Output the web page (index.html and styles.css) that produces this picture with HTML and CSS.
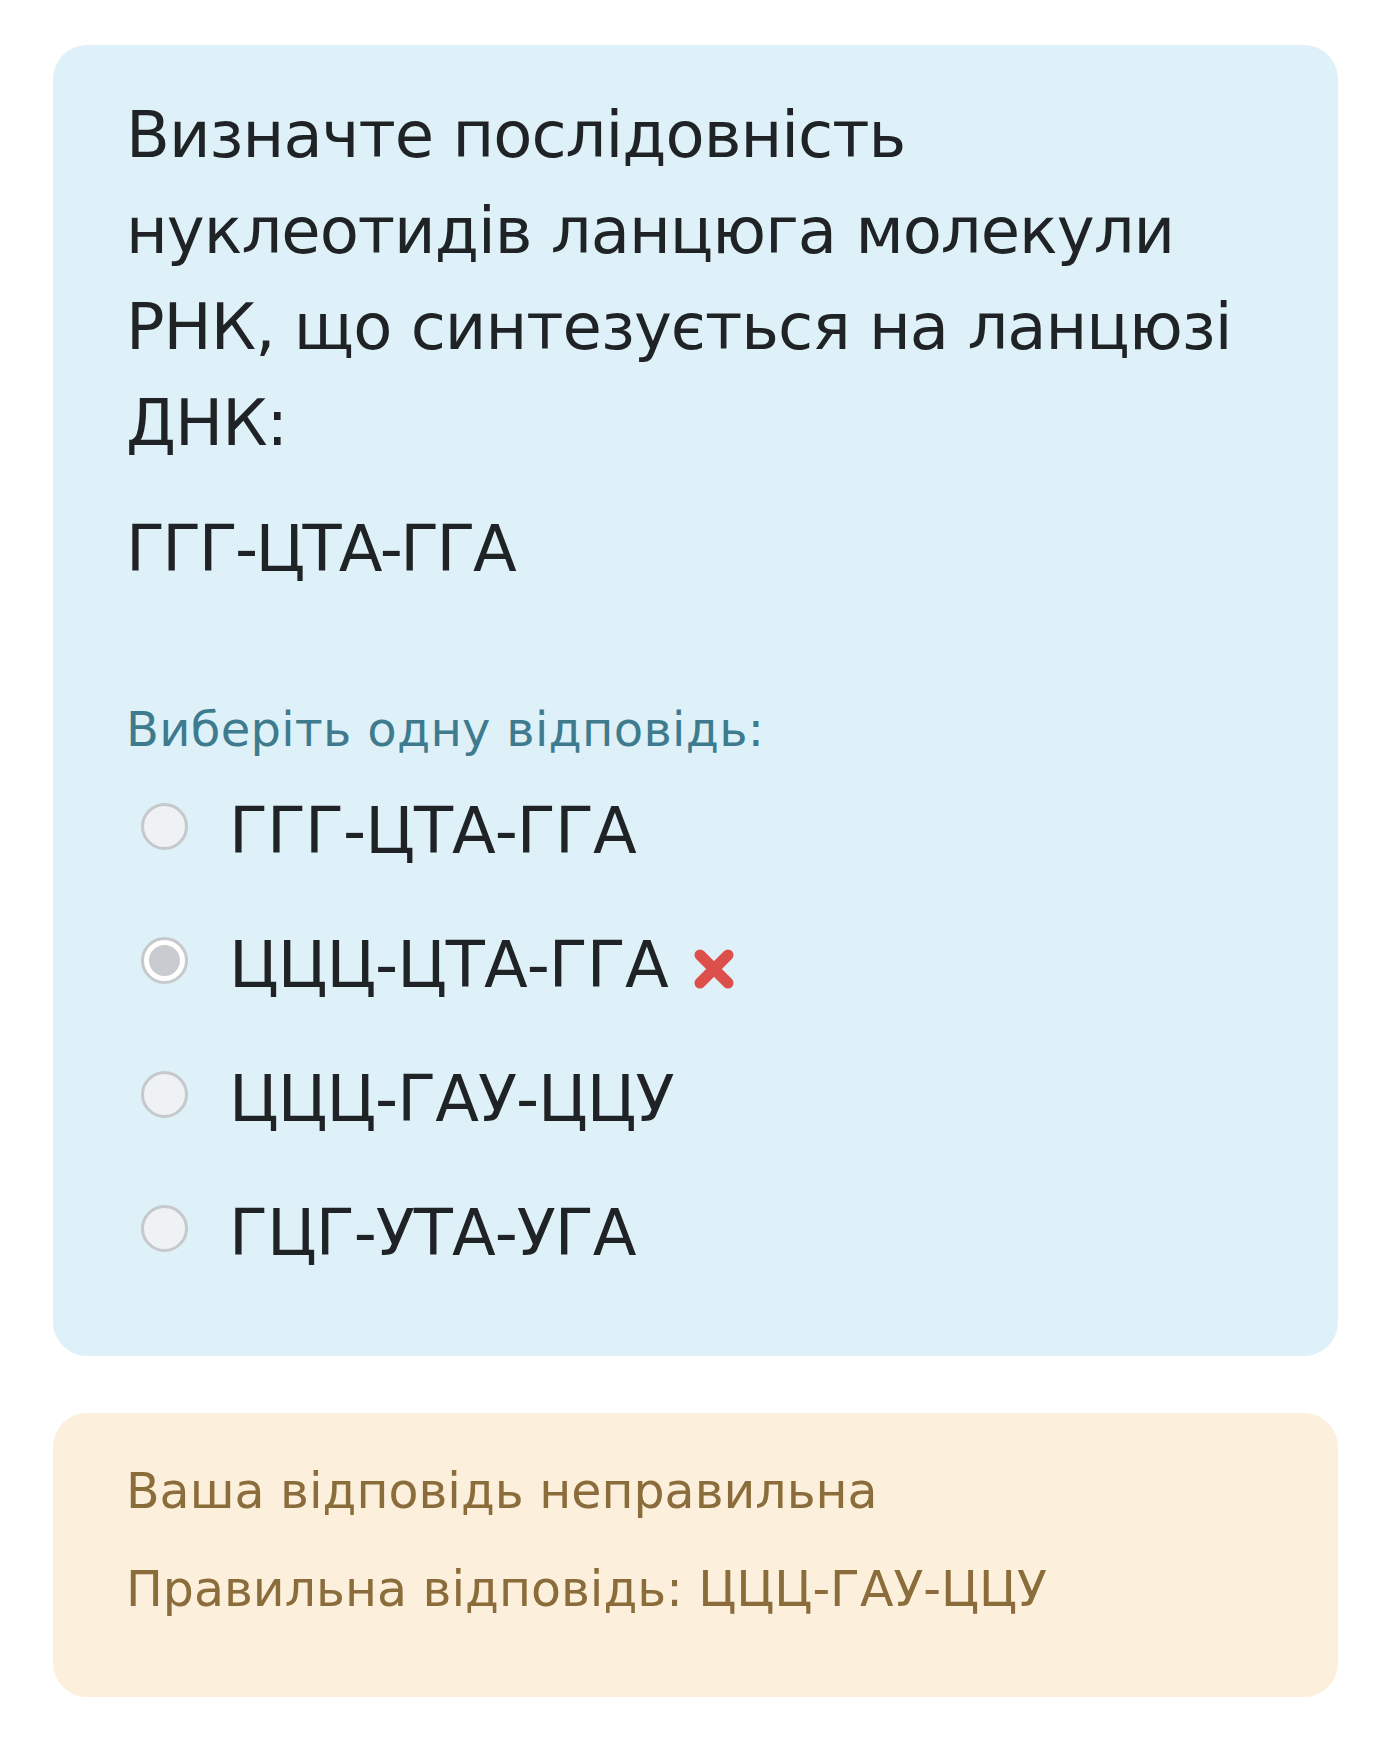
FILE: index.html
```html
<!DOCTYPE html>
<html lang="uk">
<head>
<meta charset="utf-8">
<title>Питання</title>
<link rel="stylesheet" href="styles.css">
</head>
<body>
<div class="page">
  <div class="card question">
    <div class="qtext">
      <p class="qline">Визначте послідовність<br>нуклеотидів ланцюга молекули<br>РНК, що синтезується на ланцюзі<br>ДНК:</p>
      <p class="qline seq">ГГГ-ЦТА-ГГА</p>
    </div>
    <div class="prompt">Виберіть одну відповідь:</div>
    <div class="answers">
      <div class="option">
        <span class="radio"></span>
        <span class="label">ГГГ-ЦТА-ГГА</span>
      </div>
      <div class="option">
        <span class="radio checked"><span class="dot"></span></span>
        <span class="label">ЦЦЦ-ЦТА-ГГА</span>
        <svg class="wrong" width="42" height="40" viewBox="0 0 42 40"><path d="M7 6 L35 34 M35 6 L7 34" stroke="#dd4f4b" stroke-width="11" stroke-linecap="round"/></svg>
      </div>
      <div class="option">
        <span class="radio"></span>
        <span class="label">ЦЦЦ-ГАУ-ЦЦУ</span>
      </div>
      <div class="option">
        <span class="radio"></span>
        <span class="label">ГЦГ-УТА-УГА</span>
      </div>
    </div>
  </div>
  <div class="card feedback">
    <div class="fb-line first">Ваша відповідь неправильна</div>
    <div class="fb-line">Правильна відповідь: ЦЦЦ-ГАУ-ЦЦУ</div>
  </div>
</div>
</body>
</html>
```
FILE: styles.css
```css
html, body {
  margin: 0;
  padding: 0;
  background: #ffffff;
}
body {
  font-family: "DejaVu Sans", "Noto Sans", sans-serif;
  color: #1f2326;
}
.page {
  padding: 45px 0 40px 53px;
  display: flex;
  flex-direction: column;
  gap: 57px;
}
.card {
  width: 1285px;
  box-sizing: border-box;
  border-radius: 34px;
}
.question {
  background: #dff1f8;
  padding: 42px 73px 75px 73px;
}
.qline {
  margin: 0 0 30px 0;
  font-size: 64px;
  line-height: 96px;
  letter-spacing: -1px;
}
.seq {
  margin: 0;
  letter-spacing: -2.7px;
}
.prompt {
  margin-top: 96px;
  font-size: 48px;
  line-height: 72px;
  letter-spacing: 0.3px;
  color: #3e7b8e;
}
.answers {
  margin-top: 18px;
  display: flex;
  flex-direction: column;
  gap: 38px;
}
.option {
  display: flex;
  align-items: flex-start;
  font-size: 64px;
  line-height: 96px;
  letter-spacing: -1px;
}
.radio {
  flex: none;
  width: 47px;
  height: 47px;
  box-sizing: border-box;
  border: 3px solid #c6c9cc;
  border-radius: 50%;
  background: #eff2f4;
  margin: 20px 41px 0 15px;
  display: flex;
  align-items: center;
  justify-content: center;
}
.radio.checked {
  background: #ffffff;
}
.dot {
  width: 31px;
  height: 31px;
  border-radius: 50%;
  background: #c8ccd0;
}
.wrong {
  flex: none;
  margin: 32px 0 0 25px;
}
.feedback {
  background: #fcefdc;
  padding: 43px 73px 71px 73px;
  color: #8a6d3b;
}
.fb-line {
  font-size: 49px;
  line-height: 72px;
}
.fb-line.first {
  margin-bottom: 26px;
}
```
